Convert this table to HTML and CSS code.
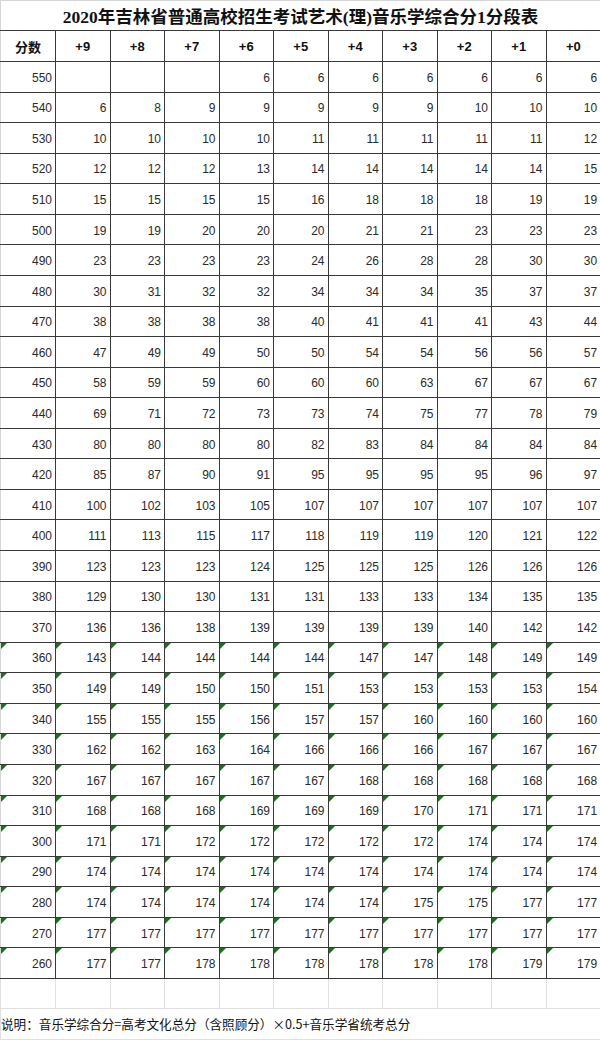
FILE: index.html
```html
<!DOCTYPE html>
<html lang="zh-CN">
<head>
<meta charset="utf-8">
<title>2020年吉林省普通高校招生考试艺术(理)音乐学综合分1分段表</title>
<link rel="stylesheet" href="styles.css">
</head>
<body>
<table class="sheet">
<colgroup>
<col class="c0"><col class="cn"><col class="cn"><col class="cn"><col class="cn"><col class="cn"><col class="cn"><col class="cn"><col class="cn"><col class="cn"><col class="cn">
</colgroup>
<tbody id="body">
<tr class="title-row"><td colspan="11" class="title">2020年吉林省普通高校招生考试艺术(理)音乐学综合分1分段表</td></tr>
<tr class="head-row"><th>分数</th><th>+9</th><th>+8</th><th>+7</th><th>+6</th><th>+5</th><th>+4</th><th>+3</th><th>+2</th><th>+1</th><th>+0</th></tr>
<tr class="row"><td>550</td><td></td><td></td><td></td><td>6</td><td>6</td><td>6</td><td>6</td><td>6</td><td>6</td><td>6</td></tr>
<tr class="row"><td>540</td><td>6</td><td>8</td><td>9</td><td>9</td><td>9</td><td>9</td><td>9</td><td>10</td><td>10</td><td>10</td></tr>
<tr class="row"><td>530</td><td>10</td><td>10</td><td>10</td><td>10</td><td>11</td><td>11</td><td>11</td><td>11</td><td>11</td><td>12</td></tr>
<tr class="row"><td>520</td><td>12</td><td>12</td><td>12</td><td>13</td><td>14</td><td>14</td><td>14</td><td>14</td><td>14</td><td>15</td></tr>
<tr class="row"><td>510</td><td>15</td><td>15</td><td>15</td><td>15</td><td>16</td><td>18</td><td>18</td><td>18</td><td>19</td><td>19</td></tr>
<tr class="row"><td>500</td><td>19</td><td>19</td><td>20</td><td>20</td><td>20</td><td>21</td><td>21</td><td>23</td><td>23</td><td>23</td></tr>
<tr class="row"><td>490</td><td>23</td><td>23</td><td>23</td><td>23</td><td>24</td><td>26</td><td>28</td><td>28</td><td>30</td><td>30</td></tr>
<tr class="row"><td>480</td><td>30</td><td>31</td><td>32</td><td>32</td><td>34</td><td>34</td><td>34</td><td>35</td><td>37</td><td>37</td></tr>
<tr class="row"><td>470</td><td>38</td><td>38</td><td>38</td><td>38</td><td>40</td><td>41</td><td>41</td><td>41</td><td>43</td><td>44</td></tr>
<tr class="row"><td>460</td><td>47</td><td>49</td><td>49</td><td>50</td><td>50</td><td>54</td><td>54</td><td>56</td><td>56</td><td>57</td></tr>
<tr class="row"><td>450</td><td>58</td><td>59</td><td>59</td><td>60</td><td>60</td><td>60</td><td>63</td><td>67</td><td>67</td><td>67</td></tr>
<tr class="row"><td>440</td><td>69</td><td>71</td><td>72</td><td>73</td><td>73</td><td>74</td><td>75</td><td>77</td><td>78</td><td>79</td></tr>
<tr class="row"><td>430</td><td>80</td><td>80</td><td>80</td><td>80</td><td>82</td><td>83</td><td>84</td><td>84</td><td>84</td><td>84</td></tr>
<tr class="row"><td>420</td><td>85</td><td>87</td><td>90</td><td>91</td><td>95</td><td>95</td><td>95</td><td>95</td><td>96</td><td>97</td></tr>
<tr class="row"><td>410</td><td>100</td><td>102</td><td>103</td><td>105</td><td>107</td><td>107</td><td>107</td><td>107</td><td>107</td><td>107</td></tr>
<tr class="row"><td>400</td><td>111</td><td>113</td><td>115</td><td>117</td><td>118</td><td>119</td><td>119</td><td>120</td><td>121</td><td>122</td></tr>
<tr class="row"><td>390</td><td>123</td><td>123</td><td>123</td><td>124</td><td>125</td><td>125</td><td>125</td><td>126</td><td>126</td><td>126</td></tr>
<tr class="row"><td>380</td><td>129</td><td>130</td><td>130</td><td>131</td><td>131</td><td>133</td><td>133</td><td>134</td><td>135</td><td>135</td></tr>
<tr class="row"><td>370</td><td>136</td><td>136</td><td>138</td><td>139</td><td>139</td><td>139</td><td>139</td><td>140</td><td>142</td><td>142</td></tr>
<tr class="row txt"><td>360</td><td>143</td><td>144</td><td>144</td><td>144</td><td>144</td><td>147</td><td>147</td><td>148</td><td>149</td><td>149</td></tr>
<tr class="row txt"><td>350</td><td>149</td><td>149</td><td>150</td><td>150</td><td>151</td><td>153</td><td>153</td><td>153</td><td>153</td><td>154</td></tr>
<tr class="row txt"><td>340</td><td>155</td><td>155</td><td>155</td><td>156</td><td>157</td><td>157</td><td>160</td><td>160</td><td>160</td><td>160</td></tr>
<tr class="row txt"><td>330</td><td>162</td><td>162</td><td>163</td><td>164</td><td>166</td><td>166</td><td>166</td><td>167</td><td>167</td><td>167</td></tr>
<tr class="row txt"><td>320</td><td>167</td><td>167</td><td>167</td><td>167</td><td>167</td><td>168</td><td>168</td><td>168</td><td>168</td><td>168</td></tr>
<tr class="row txt"><td>310</td><td>168</td><td>168</td><td>168</td><td>169</td><td>169</td><td>169</td><td>170</td><td>171</td><td>171</td><td>171</td></tr>
<tr class="row txt"><td>300</td><td>171</td><td>171</td><td>172</td><td>172</td><td>172</td><td>172</td><td>172</td><td>174</td><td>174</td><td>174</td></tr>
<tr class="row txt"><td>290</td><td>174</td><td>174</td><td>174</td><td>174</td><td>174</td><td>174</td><td>174</td><td>174</td><td>174</td><td>174</td></tr>
<tr class="row txt"><td>280</td><td>174</td><td>174</td><td>174</td><td>174</td><td>174</td><td>174</td><td>175</td><td>175</td><td>177</td><td>177</td></tr>
<tr class="row txt"><td>270</td><td>177</td><td>177</td><td>177</td><td>177</td><td>177</td><td>177</td><td>177</td><td>177</td><td>177</td><td>177</td></tr>
<tr class="row txt"><td>260</td><td>177</td><td>177</td><td>178</td><td>178</td><td>178</td><td>178</td><td>178</td><td>178</td><td>179</td><td>179</td></tr>
<tr class="blank-row"><td></td><td></td><td></td><td></td><td></td><td></td><td></td><td></td><td></td><td></td><td></td></tr>
<tr class="note-row"><td colspan="11" class="note">说明：音乐学综合分=高考文化总分（含照顾分）×0.5+音乐学省统考总分</td></tr>
</tbody>
</table>
</body>
</html>
```
FILE: styles.css
```css
html, body {
  margin: 0;
  padding: 0;
  background: #ffffff;
}

.sheet {
  width: 600px;
  border-collapse: collapse;
  table-layout: fixed;
  font-family: "Liberation Sans", "Noto Sans CJK SC", sans-serif;
  color: #1a1a1a;
}

.c0 { width: 55px; }
.cn { width: 54.5px; }

.sheet td, .sheet th {
  padding: 0;
  overflow: hidden;
  white-space: nowrap;
}

.title-row { height: 30px; }
.title {
  border: 1px solid #d6d6d6;
  border-bottom: 1px solid #3a3a3a;
  text-align: center;
  font-family: "Liberation Serif", "Noto Sans CJK SC", serif;
  font-weight: 700;
  font-size: 17.5px;
  color: #111;
  padding-top: 2px;
}

.head-row { height: 31px; }
.head-row th {
  border: 1px solid #3a3a3a;
  font-size: 13px;
  font-weight: 700;
  text-align: center;
  color: #111;
}
.head-row th:first-child { border-left-color: #d6d6d6; }
.head-row th:last-child { border-right-color: #d6d6d6; }

.row { height: 30.57px; }
.row td {
  border: 1px solid #3a3a3a;
  text-align: right;
  font-size: 12px;
  padding-right: 3px;
  padding-top: 2px;
  position: relative;
  color: #2a2a2a;
}
.row td:first-child { border-left-color: #d6d6d6; }
.row td:last-child { border-right-color: #b8b8b8; }

.txt td::before {
  content: "";
  position: absolute;
  left: 0;
  top: 0;
  width: 0;
  height: 0;
  border-top: 6px solid #1f6e1f;
  border-right: 6px solid transparent;
}

.blank-row { height: 30px; }
.blank-row td {
  border: 1px solid #e0e0e0;
  border-top: 1px solid #3a3a3a;
}

.note-row { height: 31px; }
.note {
  border: 1px solid #e0e0e0;
  text-align: left;
  padding-left: 4px;
  font-family: "Noto Sans CJK SC", sans-serif;
  font-size: 12.6px;
  color: #111;
}
```
